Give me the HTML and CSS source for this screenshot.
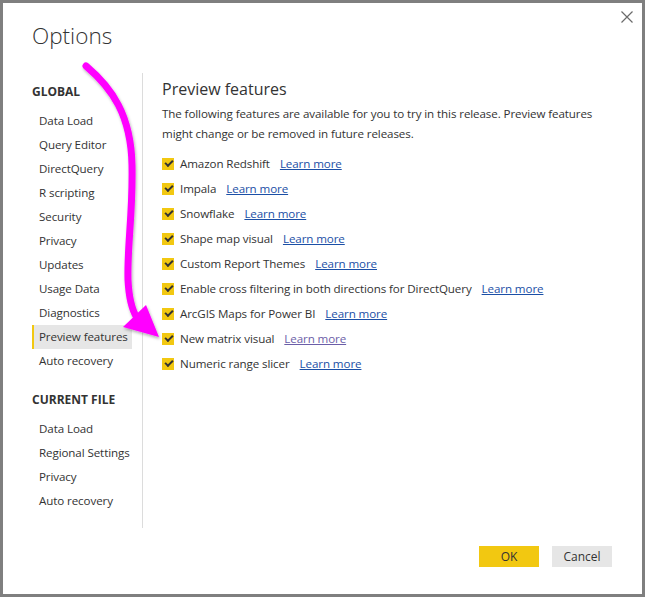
FILE: index.html
```html
<!DOCTYPE html>
<html>
<head>
<meta charset="utf-8">
<link rel="stylesheet" href="styles.css">
</head>
<body>
<div class="dialog">
  <header class="head">
    <h1 class="title">Options</h1>
    <button class="close" aria-label="Close">
      <svg width="12" height="12" viewBox="0 0 12 12"><path d="M0.5 0.5L11.5 11.5M11.5 0.5L0.5 11.5" stroke="#6b6b6b" stroke-width="1.2" fill="none"/></svg>
    </button>
  </header>
  <div class="main">
    <nav class="side">
      <div class="group">GLOBAL</div>
      <ul class="items">
        <li>Data Load</li>
        <li>Query Editor</li>
        <li>DirectQuery</li>
        <li>R scripting</li>
        <li>Security</li>
        <li>Privacy</li>
        <li>Updates</li>
        <li>Usage Data</li>
        <li>Diagnostics</li>
        <li class="sel">Preview features</li>
        <li>Auto recovery</li>
      </ul>
      <div class="group group2">CURRENT FILE</div>
      <ul class="items">
        <li>Data Load</li>
        <li>Regional Settings</li>
        <li>Privacy</li>
        <li>Auto recovery</li>
      </ul>
    </nav>
    <section class="content">
      <h2 class="heading">Preview features</h2>
      <p class="desc">The following features are available for you to try in this release. Preview features might change or be removed in future releases.</p>
      <ul class="feats">
        <li><span class="cb"></span><span class="lbl">Amazon Redshift</span><a href="#">Learn more</a></li>
        <li><span class="cb"></span><span class="lbl">Impala</span><a href="#">Learn more</a></li>
        <li><span class="cb"></span><span class="lbl">Snowflake</span><a href="#">Learn more</a></li>
        <li><span class="cb"></span><span class="lbl">Shape map visual</span><a href="#">Learn more</a></li>
        <li><span class="cb"></span><span class="lbl">Custom Report Themes</span><a href="#">Learn more</a></li>
        <li><span class="cb"></span><span class="lbl">Enable cross filtering in both directions for DirectQuery</span><a href="#">Learn more</a></li>
        <li><span class="cb"></span><span class="lbl">ArcGIS Maps for Power BI</span><a href="#">Learn more</a></li>
        <li><span class="cb"></span><span class="lbl">New matrix visual</span><a href="#" class="visited">Learn more</a></li>
        <li><span class="cb"></span><span class="lbl">Numeric range slicer</span><a href="#">Learn more</a></li>
      </ul>
    </section>
  </div>
  <footer class="foot">
    <button class="btn ok">OK</button>
    <button class="btn cancel">Cancel</button>
  </footer>
  <svg class="arrow" width="645" height="597" viewBox="0 0 645 597">
    <defs>
      <filter id="sh" x="-20%" y="-20%" width="140%" height="140%">
        <feDropShadow dx="1" dy="2" stdDeviation="1.5" flood-color="#000" flood-opacity="0.3"/>
      </filter>
    </defs>
    <g filter="url(#sh)">
      <path d="M86 66 C112 88 131 115 132 165 C133 215 127 245 128 280 C129 300 132 310 137 318" stroke="#ff00ff" stroke-width="7" stroke-linecap="round" fill="none"/>
      <polygon points="123,327 146,305 159,337" fill="#ff00ff"/>
    </g>
  </svg>
</div>
</body>
</html>
```
FILE: styles.css
```css
* { box-sizing: border-box; }
html, body { margin: 0; padding: 0; }
body {
  width: 645px;
  height: 597px;
  font-family: "Open Sans", "Noto Sans", sans-serif;
  color: #333;
  background: #fff;
}
.dialog {
  position: relative;
  width: 645px;
  height: 597px;
  border: 3px solid #7f7f7f;
  background: #fff;
  display: flex;
  flex-direction: column;
}
.head {
  height: 70px;
  position: relative;
}
.title {
  margin: 0;
  padding: 17px 0 0 29px;
  font-size: 22.5px;
  font-weight: 300;
  line-height: 32px;
  color: #333;
}
.close {
  position: absolute;
  top: 7px;
  right: 8px;
  width: 14px;
  height: 14px;
  padding: 1px;
  border: 0;
  background: transparent;
  line-height: 0;
}
.main {
  display: flex;
  height: 455px;
}
.side {
  width: 140px;
  padding-left: 29px;
  padding-top: 7px;
  border-right: 1px solid #dcdcdc;
}
.group {
  font-size: 12px;
  font-weight: 700;
  line-height: 24px;
  height: 24px;
  margin-bottom: 5px;
  color: #333;
}
.group2 { margin-top: 15px; }
.items {
  list-style: none;
  margin: 0;
  padding: 0;
  width: 100px;
}
.items li {
  font-size: 11.6px;
  letter-spacing: -0.1px;
  line-height: 24px;
  height: 24px;
  padding-left: 7px;
  color: #333;
  white-space: nowrap;
}
.items li.sel {
  background: #e6e6e6;
  border-left: 2px solid #f2c811;
  padding-left: 5px;
}
.content {
  padding: 4px 0 0 19px;
  flex: 1;
}
.heading {
  margin: 0;
  font-size: 16px;
  font-weight: 400;
  line-height: 24px;
  color: #333;
}
.desc {
  margin: 3px 0 0;
  font-size: 11.6px;
  letter-spacing: -0.1px;
  line-height: 20px;
  width: 440px;
}
.feats {
  list-style: none;
  margin: 7px 0 0;
  padding: 0;
}
.feats li {
  display: flex;
  align-items: center;
  height: 25px;
  font-size: 11.6px;
  letter-spacing: -0.1px;
}
.cb {
  width: 12px;
  height: 12px;
  background: #f2c811;
  margin-right: 6px;
  position: relative;
}
.cb::after {
  content: "";
  position: absolute;
  left: 3px;
  top: 2px;
  width: 6px;
  height: 3px;
  border-left: 2px solid #333;
  border-bottom: 2px solid #333;
  transform: rotate(-45deg);
}
.lbl { margin-right: 10px; }
.feats a {
  color: #1b4fa6;
  text-decoration: underline;
}
.feats a.visited { color: #6b5ea8; }
.foot {
  flex: 1;
  display: flex;
  justify-content: flex-end;
  align-items: flex-start;
  gap: 13px;
  padding: 18px 30px 0 0;
}
.btn {
  width: 60px;
  height: 21px;
  border: 0;
  font-family: inherit;
  font-size: 12px;
  color: #333;
  padding: 0;
}
.ok { background: #f2c811; }
.cancel { background: #e6e6e6; }
.arrow {
  position: absolute;
  left: -3px;
  top: -3px;
  pointer-events: none;
}
```
